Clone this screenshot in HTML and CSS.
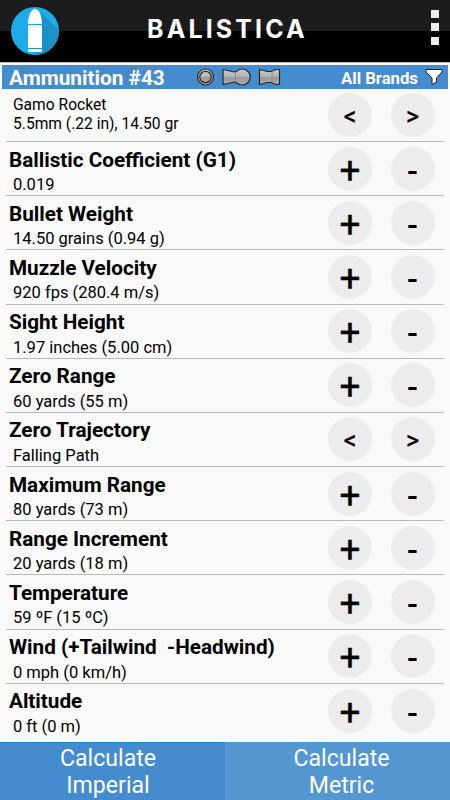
FILE: index.html
```html
<!DOCTYPE html>
<html lang="en">
<head>
  <meta charset="UTF-8" />
  <meta name="viewport" content="width=device-width, initial-scale=1.0" />
  <title>Balistica</title>
  <link rel="stylesheet" href="styles.css">
</head>
<body>
  <header>
    <svg class="logo" viewBox="0 0 48 48">
      <circle cx="24" cy="24" r="24" fill="#1eabea" />
      <path d="M30 6 L47.500 23 A24 24 0 0 1 28 47.500 L17 43 Z" fill="#1b91c8" />
      <path d="M17 17 C17 9 20 2 24 2 C28 2 31 9 31 17 Z" fill="#fff" />
      <path d="M17 18 H31 V41 H17 Z M17 42 H31 V45 H17 Z" fill="#fff" />
    </svg>
    <h1>BALISTICA</h1>
    <div class="menu"><i></i><i></i><i></i></div>
  </header>
  <div class="bar">
    <h2>Ammunition #43</h2>
    <svg class="pellets" viewBox="0 0 86 20">
      <defs>
        <linearGradient id="metal" x1="0" y1="0" x2="0" y2="1">
          <stop offset="0" stop-color="#c8c8c8" />
          <stop offset=".5" stop-color="#b2b2b2" />
          <stop offset=".5" stop-color="#9a9a9a" />
          <stop offset="1" stop-color="#aaa" />
        </linearGradient>
      </defs>
      <g fill="url(#metal)" stroke="#292929" stroke-width="1.200">
        <circle cx="9.500" cy="10" r="8" />
        <circle cx="9.500" cy="10" r="5.700" />
        <path d="M27 2.500 L32 3.500 L38 5 L41 4 A8 8 0 1 1 41 16 L38 15 L32 16.500 L27 17.500 Z" />
        <path d="M63.500 2.500 L68 3.500 L71 4.500 H75 L80 2.500 H83.500 V17.500 H80 L75 15.500 H71 L68 16.500 L63.500 17.500 Z" />
      </g>
      <path d="M39.500 5 V15 M76 5 V15" stroke="#888" fill="none" />
    </svg>
    <span class="brands">All Brands</span>
    <svg class="filter" viewBox="0 0 18 18">
      <path d="M1 1.500 H17 V4 L11.500 10 V14 L7 16.500 V10 L1 4 Z" fill="#fff" stroke="#222" />
    </svg>
  </div>
  <div class="rows">
    <div class="row ammo">
      <div class="info"><p>Gamo Rocket</p><p>5.5mm (.22 in), 14.50 gr</p></div>
      <button class="arrow">&lt;</button><button class="arrow">&gt;</button>
    </div>
    <div class="row">
      <div class="info"><h3>Ballistic Coefficient (G1)</h3><p>0.019</p></div>
      <button class="plus">+</button><button class="minus">-</button>
    </div>
    <div class="row">
      <div class="info"><h3>Bullet Weight</h3><p>14.50 grains (0.94 g)</p></div>
      <button class="plus">+</button><button class="minus">-</button>
    </div>
    <div class="row">
      <div class="info"><h3>Muzzle Velocity</h3><p>920 fps (280.4 m/s)</p></div>
      <button class="plus">+</button><button class="minus">-</button>
    </div>
    <div class="row">
      <div class="info"><h3>Sight Height</h3><p>1.97 inches (5.00 cm)</p></div>
      <button class="plus">+</button><button class="minus">-</button>
    </div>
    <div class="row">
      <div class="info"><h3>Zero Range</h3><p>60 yards (55 m)</p></div>
      <button class="plus">+</button><button class="minus">-</button>
    </div>
    <div class="row">
      <div class="info"><h3>Zero Trajectory</h3><p>Falling Path</p></div>
      <button class="arrow">&lt;</button><button class="arrow">&gt;</button>
    </div>
    <div class="row">
      <div class="info"><h3>Maximum Range</h3><p>80 yards (73 m)</p></div>
      <button class="plus">+</button><button class="minus">-</button>
    </div>
    <div class="row">
      <div class="info"><h3>Range Increment</h3><p>20 yards (18 m)</p></div>
      <button class="plus">+</button><button class="minus">-</button>
    </div>
    <div class="row">
      <div class="info"><h3>Temperature</h3><p>59 ºF (15 ºC)</p></div>
      <button class="plus">+</button><button class="minus">-</button>
    </div>
    <div class="row">
      <div class="info"><h3>Wind (+Tailwind&nbsp; -Headwind)</h3><p>0 mph (0 km/h)</p></div>
      <button class="plus">+</button><button class="minus">-</button>
    </div>
    <div class="row">
      <div class="info"><h3>Altitude</h3><p>0 ft (0 m)</p></div>
      <button class="plus">+</button><button class="minus">-</button>
    </div>
  </div>
  <footer>
    <button>Calculate<br>Imperial</button>
    <button class="metric">Calculate<br>Metric</button>
  </footer>
</body>
</html>
```

FILE: styles.css
```css
* { box-sizing: border-box; }
body {
  margin: 0;
  height: 800px;
  overflow: hidden;
  display: flex;
  flex-direction: column;
  font-family: Roboto, sans-serif;
  background: #f9f9f9;
  color: #000;
}
h1, h2, h3, p { margin: 0; }
button {
  border: none;
  padding: 0;
  font-family: inherit;
  color: #000;
}
header {
  height: 63px;
  flex: none;
  display: flex;
  align-items: center;
  background: linear-gradient(#1c1c1c 31px, #000 31px);
  border-bottom: 1px solid #bbb;
  color: #fff;
}
.logo { width: 48px; height: 48px; margin-left: 11px; }
h1 {
  width: 160px;
  margin: -5px 0 0 88px;
  font: bold 25px/30px Inter, sans-serif;
  letter-spacing: 3.1px;
  white-space: nowrap;
}
.menu {
  margin: -8px 0 0 124px;
  display: grid;
  gap: 5.5px;
}
.menu i { width: 8px; height: 8px; background: #eee; }
.bar {
  height: 24px;
  flex: none;
  margin: 2px 2px 0;
  padding-left: 7px;
  display: flex;
  align-items: center;
  background: #448ccd;
  color: #fff;
}
h2 { width: 187px; font-size: 20.8px; line-height: 24px; padding-top: 2px; }
.pellets { width: 86px; height: 20px; flex: none; }
.brands {
  width: 77px;
  margin-left: 59px;
  padding-top: 2px;
  font-size: 16.7px;
  font-weight: bold;
  white-space: nowrap;
}
.filter { width: 18px; height: 18px; margin-left: 7px; flex: none; }
.rows { padding: 0 6px; height: 652px; flex: none; }
.row {
  height: 54.18px;
  display: flex;
  align-items: center;
  border-bottom: 1px solid #b9b9b9;
}
.row:last-child { border: none; }
.ammo { height: 53px; }
.info { width: 322px; padding-left: 3px; align-self: flex-start; }
h3 { font-size: 20.7px; line-height: 24px; padding-top: 5.5px; white-space: nowrap; }
.info p { font-size: 16.5px; line-height: 20px; padding: 3.5px 0 0 4px; }
.ammo p { font-size: 15.6px; line-height: 19px; padding: 0 0 0 4px; }
.ammo .info { padding-top: 7px; }
.row button {
  width: 44px;
  height: 44px;
  border-radius: 50%;
  background: #ececec;
  font-weight: 500;
  line-height: 40px;
}
.row button + button { margin-left: 18.5px; }
.row .plus { font-size: 37px; font-weight: 400; padding-top: 4px; -webkit-text-stroke: 0.3px #000; }
.row .minus { font-size: 32px; padding-top: 4px; }
.row .arrow { font-size: 25px; font-weight: 400; padding-top: 3px; -webkit-text-stroke: 0.4px #000; }
footer {
  height: 58px;
  margin-top: auto;
  flex: none;
  display: flex;
}
footer button {
  width: 50%;
  padding-right: 9px;
  background: #448ccd;
  border-top: 1px solid #168ad0;
  color: #fff;
  font-size: 23.1px;
  line-height: 27px;
}
footer .metric { background: #5496cf; padding: 0 0 0 8px; border-color: #5496cf; }
```
